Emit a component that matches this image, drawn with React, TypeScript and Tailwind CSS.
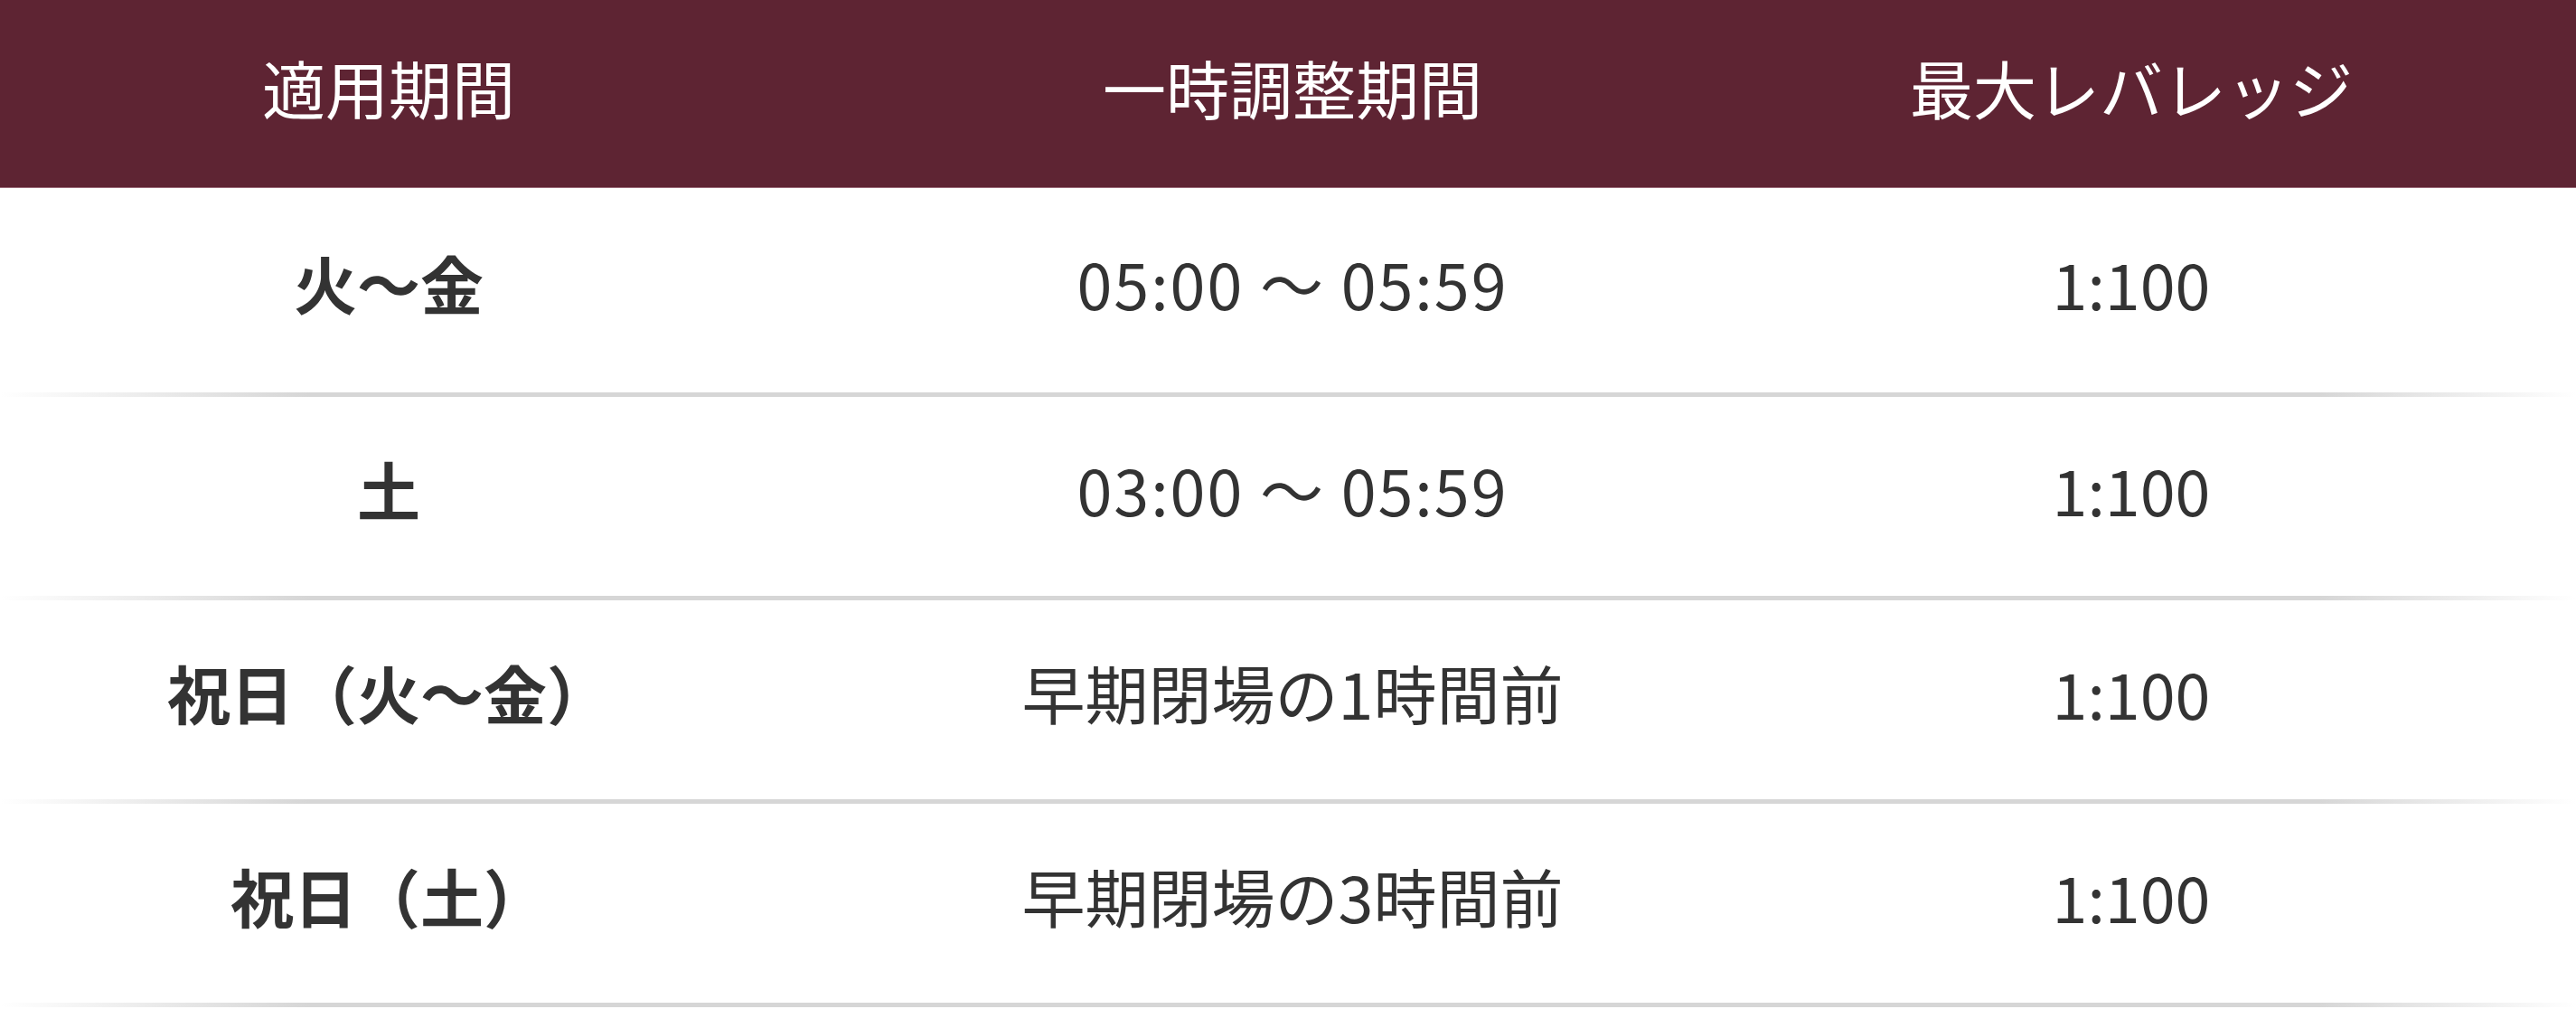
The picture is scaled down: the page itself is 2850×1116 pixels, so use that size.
const rows = [
  { period: "火〜金", window: "05:00 〜 05:59", leverage: "1:100", digits: true },
  { period: "土", window: "03:00 〜 05:59", leverage: "1:100", digits: true },
  { period: "祝日（火〜金）", window: "早期閉場の1時間前", leverage: "1:100", digits: false },
  { period: "祝日（土）", window: "早期閉場の3時間前", leverage: "1:100", digits: false },
];

const font = "font-['Noto_Sans_CJK_JP','Noto_Sans_CJK_SC',sans-serif]";

function Divider() {
  return (
    <div className="h-[5px] bg-[linear-gradient(to_right,rgba(214,214,214,0)_0%,#d6d6d6_12%,#d6d6d6_90%,rgba(214,214,214,0)_100%)]" />
  );
}

export default function App() {
  return (
    <div className={`w-[2850px] h-[1116px] bg-white overflow-hidden ${font}`}>
      <div className="grid grid-cols-[860px_1140px_1fr] h-[208px] pb-[14px] bg-[#5e2433] border-b border-[#9a6a78] text-white text-[70px] font-normal leading-none">
        <div className="flex items-center justify-center">適用期間</div>
        <div className="flex items-center justify-center">一時調整期間</div>
        <div className="flex items-center justify-center pr-[134px]">最大レバレッジ</div>
      </div>

      {rows.map((row, i) => (
        <div key={i}>
          <div
            className={`grid grid-cols-[860px_1140px_1fr] pb-[16px] text-[#333333] text-[70px] leading-none ${
              i === 0 ? "h-[226px]" : "h-[220px]"
            }`}
          >
            <div className="flex items-center justify-center font-bold">{row.period}</div>
            <div className={`flex items-center justify-center ${row.digits ? "tracking-[2px]" : ""}`}>
              {row.window}
            </div>
            <div className="flex items-center justify-center pr-[134px]">{row.leverage}</div>
          </div>
          <Divider />
        </div>
      ))}
    </div>
  );
}
